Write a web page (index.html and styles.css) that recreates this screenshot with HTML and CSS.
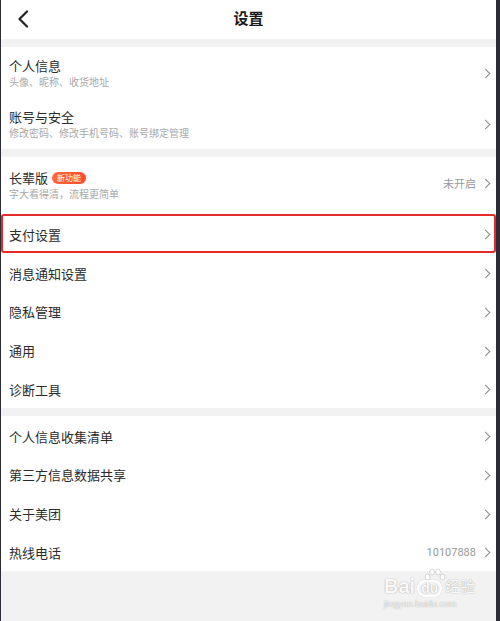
FILE: index.html
```html
<!DOCTYPE html>
<html lang="zh-CN">
<head>
<meta charset="utf-8">
<title>设置</title>
<link rel="stylesheet" href="styles.css">
</head>
<body>
<div class="screen">
  <header class="topbar">
    <svg class="back" width="12" height="18" viewBox="0 0 12 18"><path d="M10 1.5 L2.5 9 L10 16.5" fill="none" stroke="#222" stroke-width="2.2" stroke-linecap="round" stroke-linejoin="round"/></svg>
    <h1 class="title">设置</h1>
  </header>

  <section class="group">
    <div class="row tall">
      <div class="texts">
        <div class="name">个人信息</div>
        <div class="sub">头像、昵称、收货地址</div>
      </div>
      <span class="chev"></span>
    </div>
    <div class="row tall">
      <div class="texts">
        <div class="name">账号与安全</div>
        <div class="sub">修改密码、修改手机号码、账号绑定管理</div>
      </div>
      <span class="chev"></span>
    </div>
  </section>

  <section class="group">
    <div class="row elder">
      <div class="texts">
        <div class="name">长辈版<span class="badge">新功能</span></div>
        <div class="sub">字大看得清，流程更简单</div>
      </div>
      <span class="value">未开启</span>
      <span class="chev"></span>
    </div>
    <div class="row highlight">
      <div class="name">支付设置</div>
      <span class="chev"></span>
    </div>
    <div class="row"><div class="name">消息通知设置</div><span class="chev"></span></div>
    <div class="row"><div class="name">隐私管理</div><span class="chev"></span></div>
    <div class="row"><div class="name">通用</div><span class="chev"></span></div>
    <div class="row"><div class="name">诊断工具</div><span class="chev"></span></div>
  </section>

  <section class="group">
    <div class="row"><div class="name">个人信息收集清单</div><span class="chev"></span></div>
    <div class="row"><div class="name">第三方信息数据共享</div><span class="chev"></span></div>
    <div class="row"><div class="name">关于美团</div><span class="chev"></span></div>
    <div class="row"><div class="name">热线电话</div><span class="value num">10107888</span><span class="chev"></span></div>
  </section>

  <div class="watermark">
    <svg class="paw" width="22" height="14" viewBox="0 0 22 14">
      <g fill="#fff" stroke="rgba(0,0,0,0.18)" stroke-width="0.8">
        <ellipse cx="3.5" cy="9" rx="2.4" ry="3"/>
        <ellipse cx="8" cy="4" rx="2.4" ry="3"/>
        <ellipse cx="14" cy="4" rx="2.4" ry="3"/>
        <ellipse cx="18.5" cy="9" rx="2.4" ry="3"/>
      </g>
    </svg>
    <div class="wm-main">Bai<span class="wm-du">du</span><span class="wm-jy">经验</span></div>
    <div class="wm-url">jingyan.baidu.com</div>
  </div>
</div>
</body>
</html>
```

FILE: styles.css
```css
html, body {
  margin: 0;
  padding: 0;
}
body {
  background: #2c2c36;
  font-family: "Noto Sans CJK SC", "Noto Sans", sans-serif;
  width: 500px;
  height: 621px;
  overflow: hidden;
}
.screen {
  position: relative;
  margin: 0 4px 0 1px;
  height: 621px;
  background: #f2f2f2;
}
.topbar {
  height: 39px;
  background: #fff;
  display: flex;
  align-items: center;
  justify-content: center;
  position: relative;
}
.back {
  position: absolute;
  left: 16px;
  top: 10px;
}
.title {
  margin: 0 0 3px;
  font-size: 15px;
  font-weight: 700;
  color: #1a1a1a;
  line-height: 20px;
}
.group {
  margin-top: 8px;
  background: #fff;
}
.row {
  height: 38.75px;
  display: flex;
  align-items: center;
  padding: 3px 4px 0 8px;
  position: relative;
  box-sizing: border-box;
}
.row.tall {
  height: 51px;
  padding-top: 2px;
}
.row.elder {
  height: 57px;
  padding-top: 1px;
}
.texts {
  display: flex;
  flex-direction: column;
  flex: 1;
}
.name {
  font-size: 13px;
  line-height: 16px;
  color: #2b2b2b;
  display: flex;
  align-items: center;
  flex: 1;
}
.texts .name {
  flex: none;
}
.sub {
  font-size: 10px;
  line-height: 16px;
  color: #a8a8a8;
}
.badge {
  margin-left: 4px;
  height: 12px;
  padding: 0 5px;
  border-radius: 6px;
  background: linear-gradient(90deg, #ff6a3a, #ff4a2a);
  color: #fff;
  font-size: 8px;
  line-height: 12px;
  display: inline-flex;
  align-items: center;
}
.value {
  font-size: 11px;
  color: #999;
  margin-right: 6px;
}
.value.num {
  font-family: Roboto, "Noto Sans", sans-serif;
  font-size: 11px;
}
.elder .value,
.elder .chev {
  margin-top: -6px;
}
.chev {
  width: 6px;
  height: 6px;
  border-top: 1.3px solid #8a8a8a;
  border-right: 1.3px solid #8a8a8a;
  transform: rotate(45deg);
  margin-right: 3px;
  flex: none;
}
.highlight::after {
  content: "";
  position: absolute;
  left: 0;
  right: 0;
  top: -0.5px;
  bottom: 0;
  border: 2px solid #e62a2a;
  border-radius: 3px;
  pointer-events: none;
}
.watermark {
  position: absolute;
  left: 383px;
  top: 575px;
  color: rgba(255, 255, 255, 0.95);
  text-shadow: 0 0 1px rgba(0, 0, 0, 0.3), 0 0 2px rgba(0, 0, 0, 0.12);
}
.paw {
  position: absolute;
  left: 40px;
  top: -7px;
}
.wm-main {
  font-family: "Liberation Sans", sans-serif;
  font-size: 20px;
  font-weight: 700;
  line-height: 22px;
  display: flex;
  align-items: center;
}
.wm-du {
  font-size: 14px;
  margin-left: 2px;
  margin-top: 4px;
  border: 2px solid rgba(255,255,255,0.95);
  box-shadow: 0 0 1px rgba(0,0,0,0.3);
  border-radius: 8px;
  padding: 0 2px;
  line-height: 13px;
  position: relative;
}
.wm-jy {
  font-family: "Noto Sans CJK SC", sans-serif;
  font-size: 15px;
  margin-left: 3px;
  font-weight: 400;
}
.wm-url {
  font-family: "Liberation Sans", sans-serif;
  font-size: 9px;
  line-height: 12px;
  margin-top: 1px;
  color: rgba(255,255,255,0.9);
}
```
